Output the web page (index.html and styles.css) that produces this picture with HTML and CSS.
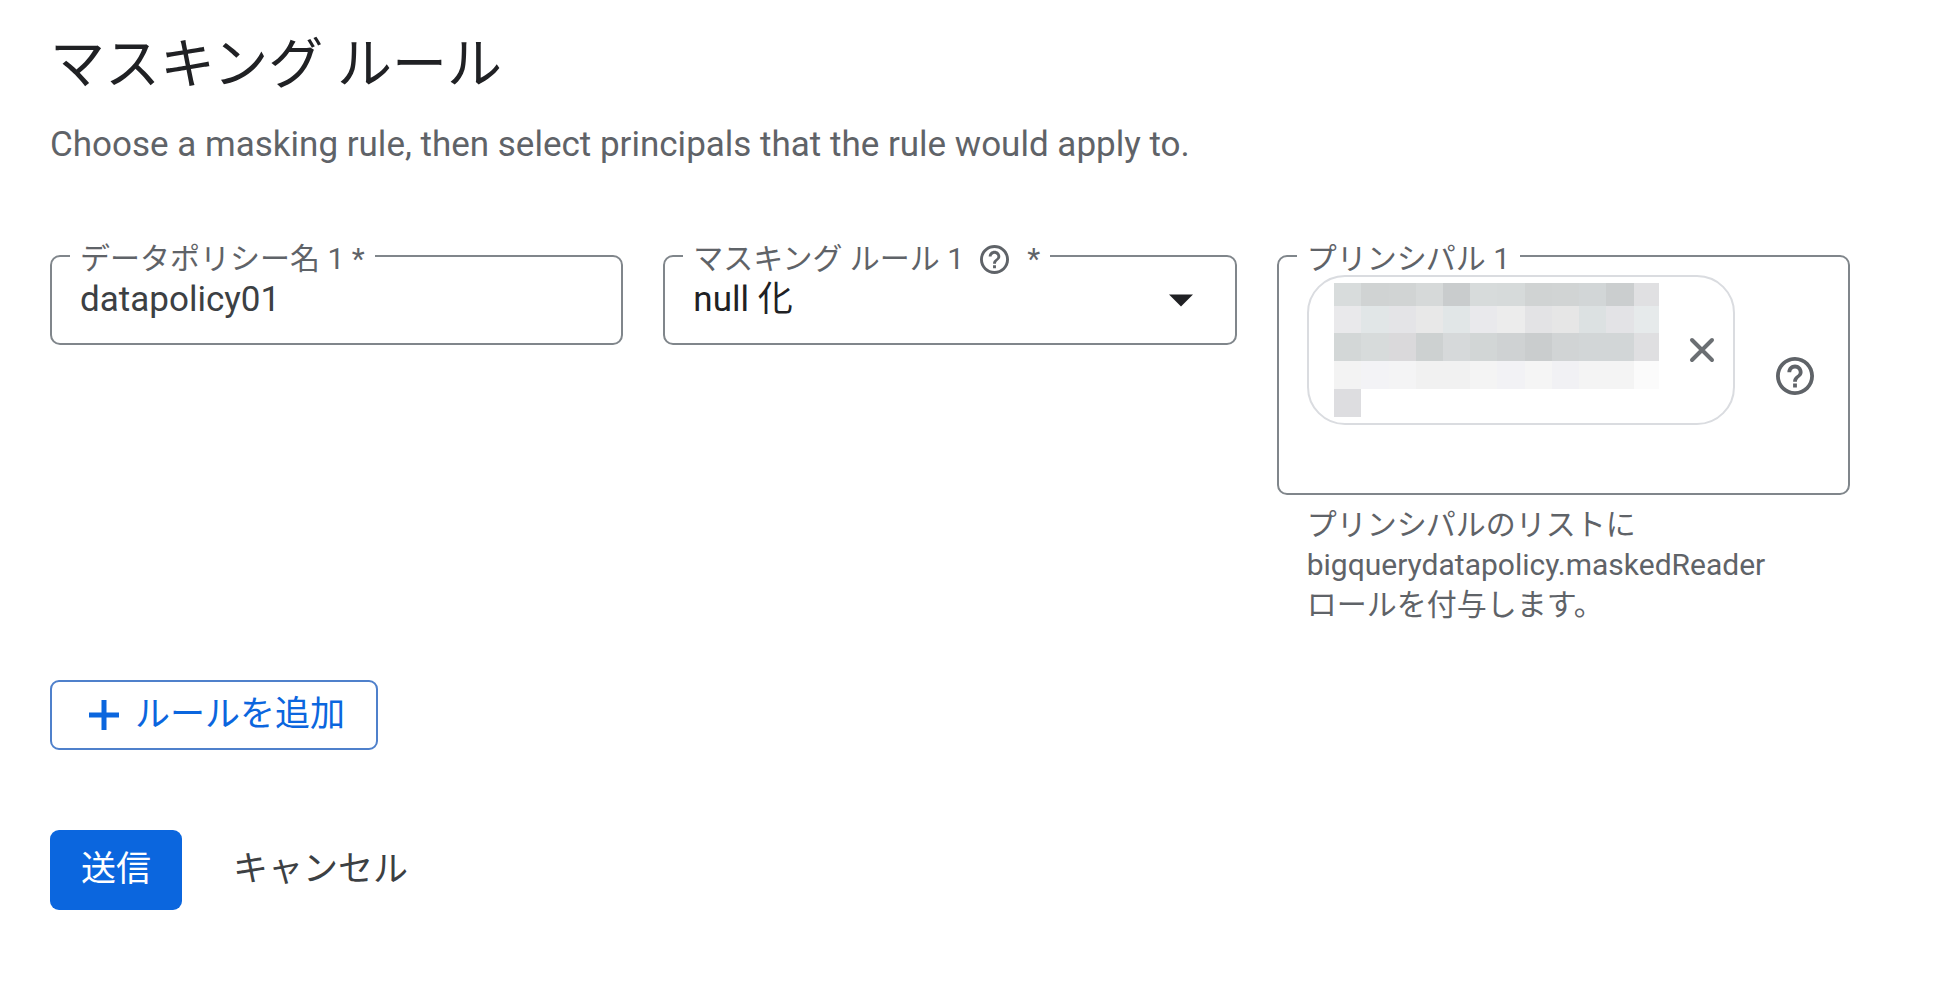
FILE: index.html
```
<!DOCTYPE html>
<html lang="ja">
    <head>
        <meta charset="utf-8" />
        <title>マスキング ルール</title>
        <meta name="viewport" content="width=device-width" />
        <link rel="stylesheet" href="styles.css">
    </head>

    <body>
        <svg class="f-defs" aria-hidden="true">
            <symbol id="help" viewBox="2 2 20 20">
                <path d="M11 18h2v-2h-2v2zm1-16C6.48 2 2 6.48 2 12s4.48 10 10 10 10-4.48 10-10S17.52 2 12 2zm0 18c-4.41 0-8-3.59-8-8s3.59-8 8-8 8 3.59 8 8-3.59 8-8 8zm0-14c-2.21 0-4 1.79-4 4h2c0-1.1.9-2 2-2s2 .9 2 2c0 2-3 1.75-3 5h2c0-2.25 3-2.5 3-5 0-2.21-1.79-4-4-4z" />
            </symbol>
        </svg>

        <form class="m-rule">
            <h1>マスキング ルール</h1>
            <p class="desc">Choose a masking rule, then select principals that the rule would apply to.</p>

            <div class="fields">
                <fieldset class="field">
                    <legend><label for="policy">データポリシー名 1 *</label></legend>
                    <input class="value" id="policy" type="text" value="datapolicy01" />
                </fieldset>

                <fieldset class="field">
                    <legend>
                        <label for="rule">マスキング ルール 1</label>
                        <svg class="tip"><use href="#help" /></svg>
                        <span>*</span>
                    </legend>
                    <div class="select">
                        <select class="value dark" id="rule">
                            <option>null 化</option>
                        </select>
                        <svg class="arrow" viewBox="0 0 24 12"><path d="M0 0h24L12 12z" /></svg>
                    </div>
                </fieldset>

                <div>
                    <fieldset class="field">
                        <legend>プリンシパル 1</legend>
                        <div class="principals">
                            <div class="chip">
                                <svg class="mosaic" viewBox="0 0 325 134" shape-rendering="crispEdges">
                                    <g>
                                        <path fill="#d8dcdc" d="M0 0h27v23H0z" />
                                        <path fill="#d0d3d3" d="M27 0h28v23H27z" />
                                        <path fill="#d1d4d4" d="M55 0h27v23H55z" />
                                        <path fill="#d6d9d9" d="M82 0h27v23H82z" />
                                        <path fill="#c9cccd" d="M109 0h27v23h-27z" />
                                        <path fill="#d7dbdb" d="M136 0h27v23h-27z" />
                                        <path fill="#d6dada" d="M163 0h28v23h-28z" />
                                        <path fill="#d0d3d3" d="M191 0h27v23h-27z" />
                                        <path fill="#d1d4d4" d="M218 0h27v23h-27z" />
                                        <path fill="#d2d6d7" d="M245 0h27v23h-27z" />
                                        <path fill="#cbcecf" d="M272 0h28v23h-28z" />
                                        <path fill="#e0e0e2" d="M300 0h25v23h-25z" />
                                    </g>
                                    <g>
                                        <path fill="#e9e9eb" d="M0 23h27v27H0z" />
                                        <path fill="#e1e6e7" d="M27 23h28v27H27z" />
                                        <path fill="#e4e4e7" d="M55 23h27v27H55z" />
                                        <path fill="#e8e8e8" d="M82 23h27v27H82z" />
                                        <path fill="#e1e6e7" d="M109 23h27v27h-27z" />
                                        <path fill="#e9e9ec" d="M136 23h27v27h-27z" />
                                        <path fill="#ececec" d="M163 23h28v27h-28z" />
                                        <path fill="#e3e3e5" d="M191 23h27v27h-27z" />
                                        <path fill="#e6e6e6" d="M218 23h27v27h-27z" />
                                        <path fill="#dce1e2" d="M245 23h27v27h-27z" />
                                        <path fill="#e3e3e6" d="M272 23h28v27h-28z" />
                                        <path fill="#e6eaeb" d="M300 23h25v27h-25z" />
                                    </g>
                                    <g>
                                        <path fill="#d3d7d7" d="M0 50h27v28H0z" />
                                        <path fill="#d7dbdb" d="M27 50h28v28H27z" />
                                        <path fill="#dad9db" d="M55 50h27v28H55z" />
                                        <path fill="#cdd1d1" d="M82 50h27v28H82z" />
                                        <path fill="#d6d9da" d="M109 50h27v28h-27z" />
                                        <path fill="#d2d6d6" d="M136 50h27v28h-27z" />
                                        <path fill="#cfd2d3" d="M163 50h28v28h-28z" />
                                        <path fill="#cacdce" d="M191 50h27v28h-27z" />
                                        <path fill="#d1d4d5" d="M218 50h27v28h-27z" />
                                        <path fill="#d2d6d7" d="M245 50h55v28h-55z" />
                                        <path fill="#dfdfe1" d="M300 50h25v28h-25z" />
                                    </g>
                                    <g>
                                        <path fill="#f3f3f3" d="M0 78h27v28H0z" />
                                        <path fill="#f3f3f6" d="M27 78h28v28H27z" />
                                        <path fill="#f4f4f5" d="M55 78h27v28H55z" />
                                        <path fill="#f1f1f1" d="M82 78h54v28H82z" />
                                        <path fill="#f4f4f4" d="M136 78h27v28h-27z" />
                                        <path fill="#f2f2f5" d="M163 78h28v28h-28z" />
                                        <path fill="#f5f5f5" d="M191 78h27v28h-27z" />
                                        <path fill="#f1f1f4" d="M218 78h27v28h-27z" />
                                        <path fill="#f4f4f4" d="M245 78h55v28h-55z" />
                                        <path fill="#fbfbfb" d="M300 78h25v28h-25z" />
                                    </g>
                                    <path fill="#dddde0" d="M0 106h27v28H0z" />
                                </svg>
                                <button class="icon" type="button" aria-label="削除">
                                    <svg class="close" viewBox="0 0 26 26"><path d="M3 3l20 20M23 3L3 23" /></svg>
                                </button>
                            </div>
                            <button class="icon" type="button" aria-label="ヘルプ">
                                <svg class="help"><use href="#help" /></svg>
                            </button>
                        </div>
                    </fieldset>
                    <p class="hint">プリンシパルのリストに<br />bigquerydatapolicy.maskedReader<br />ロールを付与します。</p>
                </div>
            </div>

            <button class="btn add" type="button">
                <svg class="plus" viewBox="0 0 30 30"><path d="M15 0v30M0 15h30" /></svg>
                ルールを追加
            </button>

            <div class="actions">
                <button class="btn submit" type="submit">送信</button>
                <button class="btn cancel" type="button">キャンセル</button>
            </div>
        </form>
    </body>
</html>
```
FILE: styles.css
```
*{box-sizing:border-box;margin:0;padding:0;}
body{background:#fff;color:#5f6368;font-family:Roboto,"Noto Sans CJK JP",sans-serif;}
button,input,select{border:0;background:none;color:inherit;font:inherit;}
button{cursor:pointer;}
svg{display:block;flex:none;fill:currentColor;}
.f-defs{position:absolute;width:0;height:0;}

.m-rule{padding:28px 84px 88px 50px;}
.m-rule h1{color:#202124;font-size:55px;font-weight:400;line-height:72px;}
.m-rule .desc{margin-top:21px;font-size:35px;line-height:48px;}

/* 入力欄 */
.fields{display:grid;grid-template-columns:repeat(3,minmax(0,1fr));gap:40px;align-items:start;margin-top:68px;}
.field{min-width:0;padding:0 18px;border:2px solid #80868b;border-radius:10px;}
.field legend{display:flex;align-items:center;padding:6px 10px 0;font-size:30px;line-height:32px;}
.field .tip{width:29px;height:29px;margin:0 18px 0 16px;}
.field .value{display:block;width:100%;height:50px;margin-bottom:18px;padding:0 10px;color:#3c4043;font-size:35px;line-height:50px;outline:0;}
.field .dark{color:#202124;-webkit-appearance:none;appearance:none;}
.select{position:relative;}
.select .arrow{position:absolute;top:19px;right:24px;width:24px;height:13px;color:#202124;pointer-events:none;}

/* プリンシパル */
.principals{display:flex;align-items:center;justify-content:space-between;height:202px;margin-bottom:16px;padding:0 16px 0 10px;}
.chip{display:flex;align-self:flex-start;align-items:center;gap:30px;height:150px;padding:0 18px 0 25px;border:2px solid #dadce0;border-radius:38px;}
.mosaic{width:325px;height:134px;}
.icon{display:flex;}
.close{width:26px;height:26px;fill:none;stroke:#6b6f73;stroke-width:4;stroke-linecap:round;}
.help{width:38px;height:38px;}
.hint{padding:10px 30px 0;font-size:30px;line-height:40px;}

/* ボタン */
.btn{display:flex;align-items:center;border-radius:9px;font-size:35px;line-height:48px;}
.add{gap:16px;height:70px;margin-top:55px;padding:0 31px 0 37px;border:2px solid #4f80cb;color:#0b66de;}
.plus{width:30px;height:30px;fill:none;stroke:currentColor;stroke-width:5;}
.actions{display:flex;gap:20px;margin-top:80px;}
.actions .btn{height:80px;padding:0 31px;}
.submit{background:#0b66de;color:#fff;}
.cancel{color:#3c4043;}
```
